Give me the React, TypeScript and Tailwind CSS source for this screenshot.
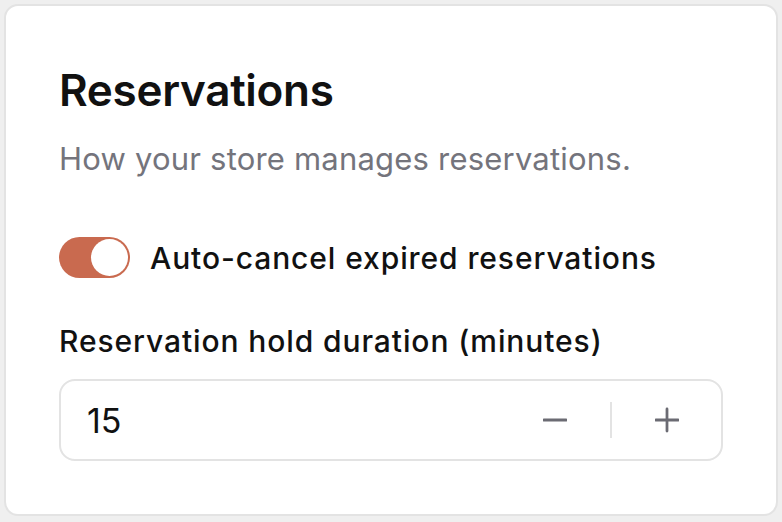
import React, { useState } from "react";

export default function App() {
  const [on, setOn] = useState(true);
  const [val, setVal] = useState(15);
  return (
    <div
      className="w-[782px] h-[522px] bg-[#efefef] pt-[4px] px-[4px] pb-[6px]"
      style={{ fontFamily: "Inter, 'Noto Sans', sans-serif" }}
    >
      <div className="h-full rounded-[14px] border-2 border-[#e3e3e3] bg-white px-[53px] pt-[58px] flex flex-col">
        <h1 className="text-[44px] leading-[52px] font-semibold text-[#111111] tracking-[-0.3px]">
          Reservations
        </h1>
        <p className="mt-[23px] text-[31px] leading-[40px] text-[#74747c] tracking-[0.2px]">
          How your store manages reservations.
        </p>
        <div className="mt-[58px] flex items-center gap-[20px]">
          <button
            onClick={() => setOn(!on)}
            className="w-[71px] h-[41px] rounded-full bg-[#c96a4f] flex items-center justify-end p-[2px]"
          >
            <span className="block w-[37px] h-[37px] rounded-full bg-white" />
          </button>
          <span className="text-[30px] leading-[40px] font-medium text-[#111111] tracking-[0.9px]">
            Auto-cancel expired reservations
          </span>
        </div>
        <label className="mt-[43px] text-[30px] leading-[40px] font-medium text-[#111111] tracking-[0.9px]">
          Reservation hold duration (minutes)
        </label>
        <div className="mt-[18px] h-[82px] rounded-[16px] border-2 border-[#e3e3e3] flex items-center pl-[26px] pr-[42px]">
          <span className="flex-1 text-[34px] text-[#111111]">{val}</span>
          <button onClick={() => setVal(val - 1)} className="w-[24px] h-[24px] flex items-center justify-center">
            <svg width="26" height="26" viewBox="0 0 26 26">
              <path d="M1 13h24" stroke="#6b6b73" strokeWidth="3" strokeLinecap="round" />
            </svg>
          </button>
          <div className="w-[2px] h-[36px] bg-[#e3e3e3] mx-[43px]" />
          <button onClick={() => setVal(val + 1)} className="w-[24px] h-[24px] flex items-center justify-center">
            <svg width="26" height="26" viewBox="0 0 26 26">
              <path d="M1 13h24M13 1v24" stroke="#6b6b73" strokeWidth="3" strokeLinecap="round" />
            </svg>
          </button>
        </div>
      </div>
    </div>
  );
}
